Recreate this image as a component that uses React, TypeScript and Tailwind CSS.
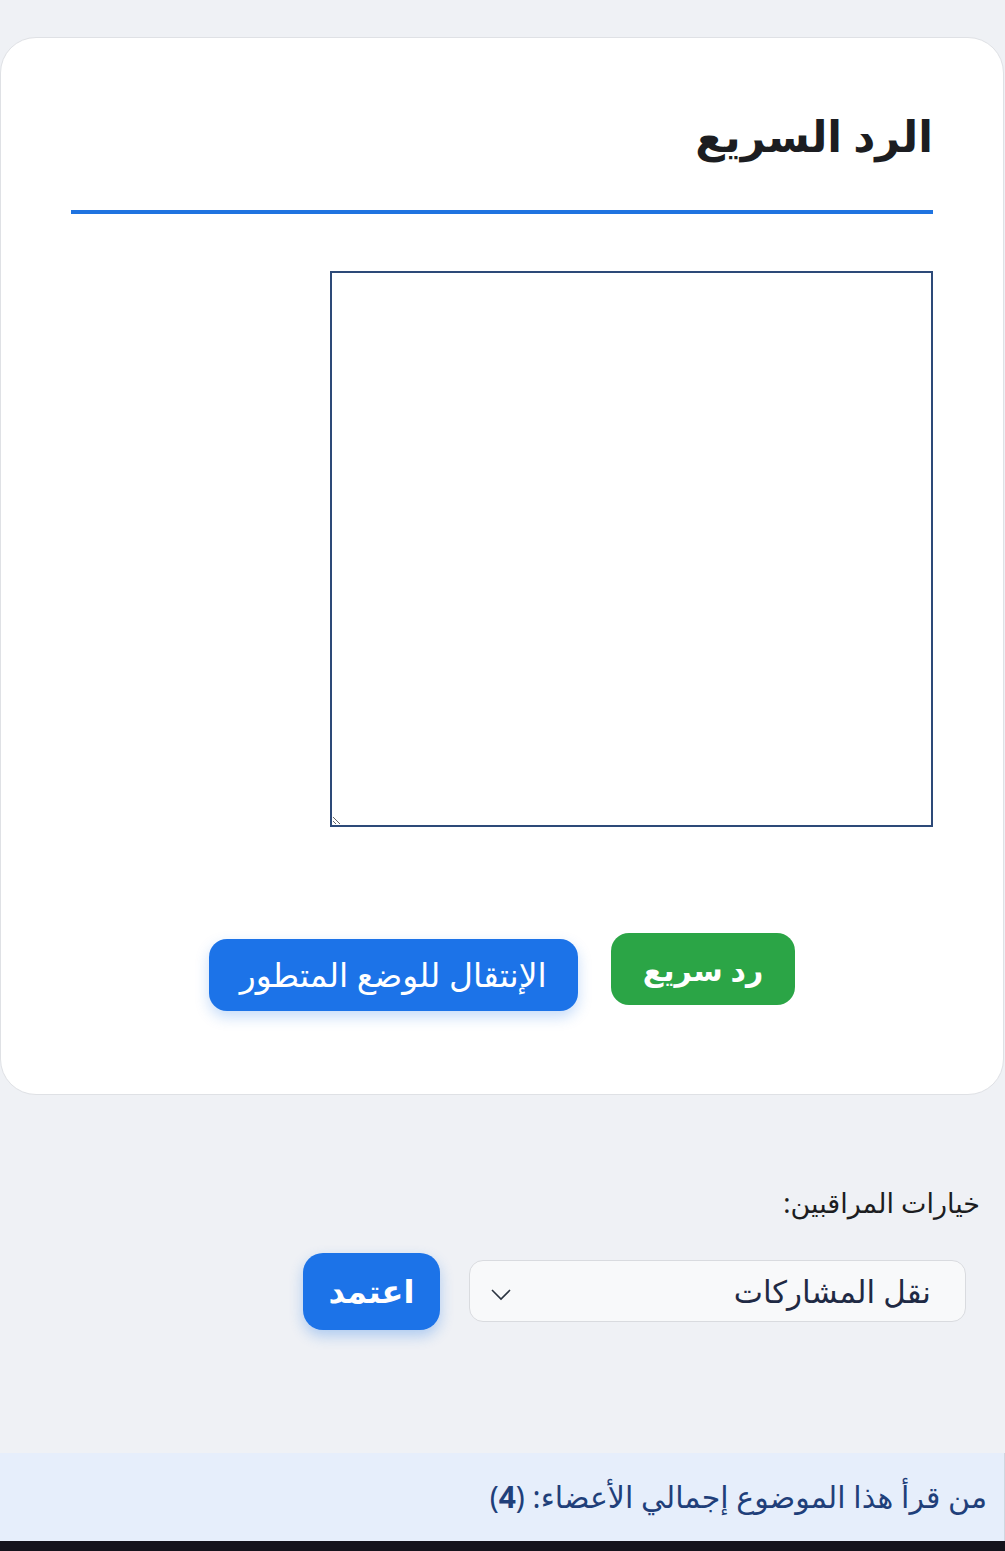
import React from 'react';

const font = { fontFamily: '"Noto Sans", "DejaVu Sans", sans-serif' };

const App: React.FC = () => {
  return (
    <div dir="rtl" style={font} className="min-h-[1551px] bg-[#eff1f5] flex flex-col">
      <div className="pt-[37px] pr-[1px]">
        <div className="bg-white border border-[#dfe1e5] rounded-[36px] px-[70px] pt-[70px] pb-[83px]">
          <h2 className="text-[43px] font-bold text-[#1c1d21] leading-[56px]">الرد السريع</h2>
          <div className="mt-[46px] h-[4px] bg-[#1f73e0]"></div>

          <div className="mt-[57px]">
            <textarea
              className="block w-[70%] h-[556px] border-2 border-[#2d4a78] bg-white resize-y outline-none"
              dir="rtl"
            ></textarea>
          </div>

          <div className="mt-[106px] flex justify-center items-start gap-[33px]">
            <button className="h-[72px] px-[32px] rounded-[18px] bg-[#2ba546] text-white text-[30px] font-bold">
              رد سريع
            </button>
            <button className="mt-[6px] h-[72px] px-[31px] rounded-[18px] bg-[#1c73e8] text-white text-[33px] shadow-[0_6px_14px_rgba(28,115,232,0.25)]">
              الإنتقال للوضع المتطور
            </button>
          </div>
        </div>
      </div>

      <div className="pt-[88px] pr-[25px]">
        <div className="text-[27px] text-[#1c1d21]">خيارات المراقبين:</div>
        <div className="mt-[29px] flex items-center gap-[29px] pr-[14px]">
          <div className="w-[497px] h-[62px] rounded-[14px] border border-[#d9dbdf] bg-[#f8f9fa] flex items-center justify-between pr-[34px] pl-[20px]">
            <span className="text-[31px] text-[#1f2a44]">نقل المشاركات</span>
            <svg width="22" height="14" viewBox="0 0 22 14" fill="none" className="mt-[6px]">
              <path d="M2 3 L11 12 L20 3" stroke="#2b3440" strokeWidth="1.6" />
            </svg>
          </div>
          <button className="w-[137px] h-[77px] rounded-[20px] bg-[#1c73e8] text-white text-[32px] font-bold shadow-[0_6px_14px_rgba(28,115,232,0.3)]">
            اعتمد
          </button>
        </div>
      </div>

      <div className="mt-[123px] h-[88px] bg-[#e6eefb] border-r border-[#d0d6e0] flex items-center pr-[17px]">
        <span className="text-[30px] text-[#1f3f7a]">
          من قرأ هذا الموضوع إجمالي الأعضاء: (<b className="font-bold">4</b>)
        </span>
      </div>
      <div className="h-[10px] bg-[#14131c]"></div>
    </div>
  );
};

export default App;
